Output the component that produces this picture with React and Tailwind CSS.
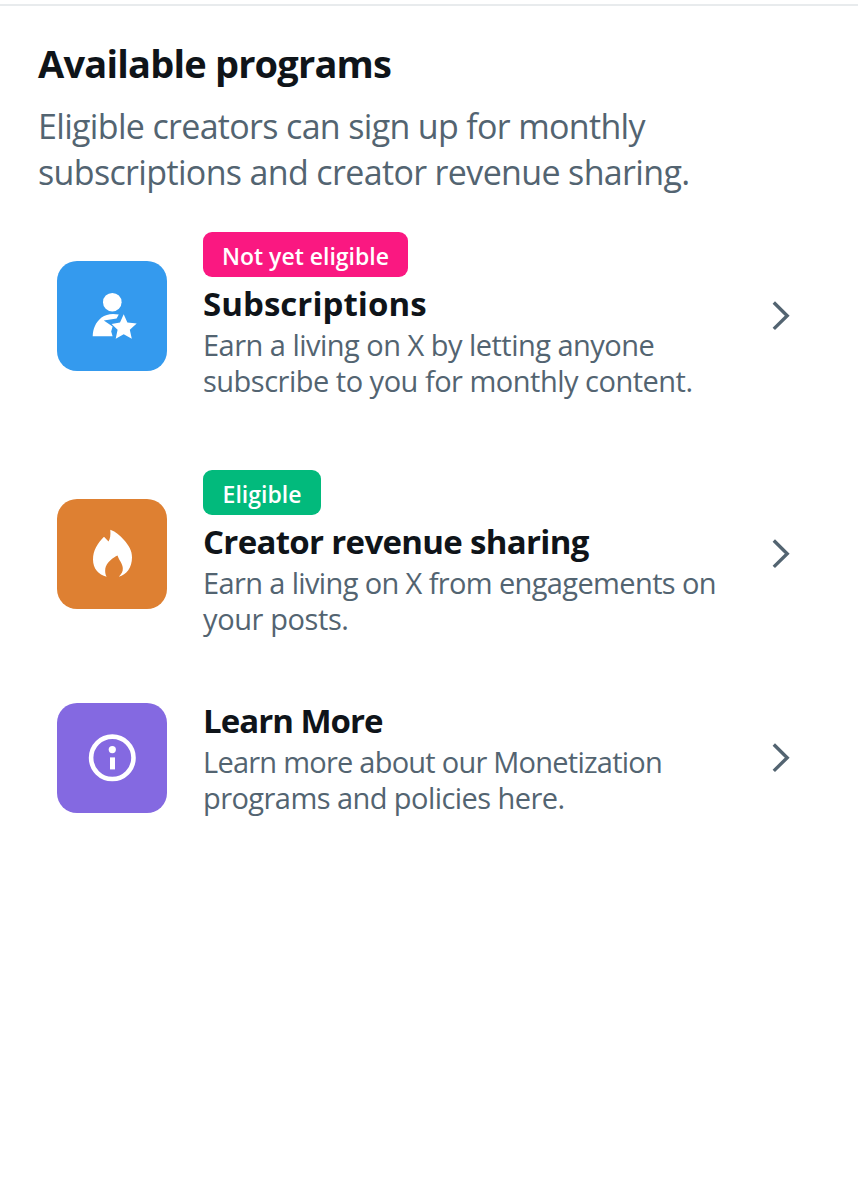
function SubscriberIcon() {
  return (
    <svg viewBox="0 0 48 48" className="size-12 overflow-visible" fill="currentColor">
      <circle cx="24.3" cy="10.2" r="9.3" />
      <path d="M4.7 44.3C5 37 7.5 30.4 13.5 25.6C18 21.9 24.5 21.2 30.8 22.5L28.6 26.6L15.8 28.6L24.6 34.6L23.2 39.4L24.6 44.3Z" />
      <path d="M35.7 22.2L39.4 30.6L48.7 31.6L41.8 37.8L43.8 46.7L35.7 42.3L27.7 46.7L29.6 37.8L23.6 31.9L32 30.6Z" />
    </svg>
  );
}

function FlameIcon() {
  return (
    <svg viewBox="0 0 48 48" className="size-12 overflow-visible" fill="currentColor">
      <path d="M22.3 -.3C28 1.8 32 5.5 36 10C41 15.7 44 20.5 44 27.5C44 37.5 38.5 44.8 30.8 46.7C33.8 43.8 35 41.5 34.8 38C34.4 33 31.2 30.5 29.5 25.4C25.5 27 18.2 32.5 17.3 38.5C16.9 42 17.3 44.3 18.6 46.7C10.5 44.8 5 38.5 5 29.5C5 20.5 9.5 13.5 16 6.8L20.5 11.4C22.2 9 22.7 5 22.3 -.3Z" />
    </svg>
  );
}

function InfoIcon() {
  return (
    <svg viewBox="0 0 48 48" className="size-12 overflow-visible" fill="currentColor">
      <circle cx="24.3" cy="23.8" r="21.2" fill="none" stroke="currentColor" strokeWidth="4.6" />
      <circle cx="24.3" cy="15.6" r="3.6" />
      <path d="M22 23.4h5v12h-5z" />
    </svg>
  );
}

function Chevron() {
  return (
    <svg viewBox="0 0 20 30" className="h-[30px] w-5 shrink-0 text-[#536471]" fill="none" stroke="currentColor" strokeWidth="3.4">
      <path d="M2.8 1.5L16.2 14.7L2.8 27.9" />
    </svg>
  );
}

const programs = [
  {
    title: 'Subscriptions',
    titleClass: 'tracking-[0.05px]',
    lines: [
      { text: 'Earn a living on X by letting anyone', className: 'tracking-[-0.52px]' },
      { text: 'subscribe to you for monthly content.', className: 'tracking-[-0.5px]' },
    ],
    badge: 'Not yet eligible',
    badgeClass: 'w-[205px] bg-[#fa1881]',
    tile: 'bg-[#349aee]',
    rowClass: 'mb-[71px]',
    Icon: SubscriberIcon,
  },
  {
    title: 'Creator revenue sharing',
    titleClass: 'tracking-[-0.68px]',
    lines: [
      { text: 'Earn a living on X from engagements on', className: 'tracking-[-0.63px]' },
      { text: 'your posts.', className: 'tracking-[-0.4px]' },
    ],
    badge: 'Eligible',
    badgeClass: 'w-[118px] bg-[#02ba7c]',
    tile: 'bg-[#de8032]',
    rowClass: 'mb-[63px]',
    Icon: FlameIcon,
  },
  {
    title: 'Learn More',
    titleClass: 'tracking-[-0.98px]',
    lines: [
      { text: 'Learn more about our Monetization', className: 'tracking-[-0.76px]' },
      { text: 'programs and policies here.', className: 'tracking-[-0.56px]' },
    ],
    tile: 'bg-[#8469e1]',
    rowClass: '',
    Icon: InfoIcon,
  },
];

function ProgramRow({ title, titleClass, lines, badge, badgeClass, tile, rowClass, Icon }) {
  return (
    <li className={`flex items-center ${rowClass}`}>
      <div className={`flex size-[110px] shrink-0 items-center justify-center rounded-[20px] text-white ${tile}`}>
        <Icon />
      </div>
      <div className="ml-9 min-w-0 flex-1 whitespace-nowrap">
        {badge && (
          <div className={`mb-1.5 flex h-[45px] items-center justify-center rounded-[9px] pt-1 text-[23px] font-semibold text-white ${badgeClass}`}>
            <span>{badge}</span>
          </div>
        )}
        <h2 className="pb-0.5 text-[33px] leading-[42px] font-bold text-[#0f1419]">
          <span className={titleClass}>{title}</span>
        </h2>
        <p className="text-[29px] leading-9 text-[#536471]">
          {lines.map((line) => (
            <span key={line.text} className="block">
              <span className={line.className}>{line.text}</span>
            </span>
          ))}
        </p>
      </div>
      <Chevron />
    </li>
  );
}

export default function App() {
  return (
    <main className="flex min-h-[1200px] flex-col bg-white pt-1 font-['Open_Sans',sans-serif]">
      <div className="h-0.5 bg-[#e8ebed]" />
      <header className="mt-[34px] pl-[38px] whitespace-nowrap">
        <h1 className="text-[38px] leading-[46px] font-bold tracking-[-0.8px] text-[#0f1419]">
          Available programs
        </h1>
        <p className="mt-[18px] text-[34px] leading-[45.5px] text-[#536471]">
          <span className="block tracking-[-0.67px]">Eligible creators can sign up for monthly</span>
          <span className="block tracking-[-0.65px]">subscriptions and creator revenue sharing.</span>
        </p>
      </header>
      <ul className="mt-[37px] pr-[67px] pl-[57px]">
        {programs.map((program) => (
          <ProgramRow key={program.title} {...program} />
        ))}
      </ul>
    </main>
  );
}
